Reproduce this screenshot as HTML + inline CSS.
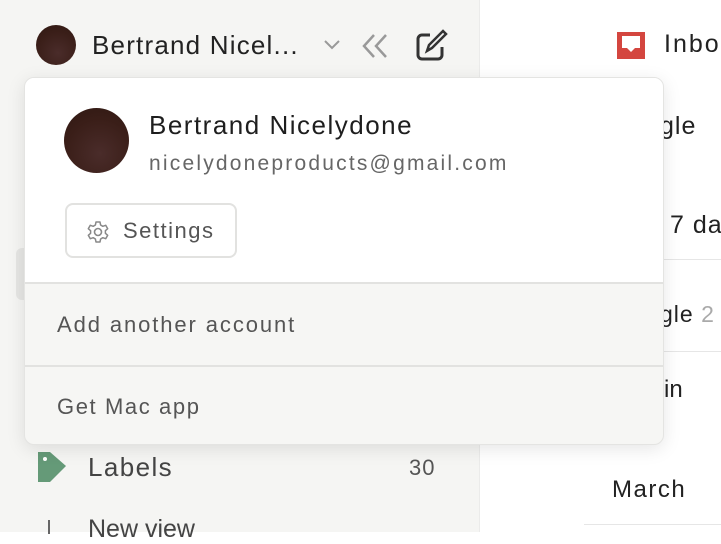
<!DOCTYPE html>
<html><head><style>
*{margin:0;padding:0;box-sizing:border-box}
body{width:721px;height:532px;overflow:hidden;font-family:"Liberation Sans",sans-serif;background:#fff;position:relative}
.side{position:absolute;left:0;top:0;width:480px;height:532px;background:#f5f5f3;border-right:1px solid #ebebea}
.abs{position:absolute;white-space:nowrap}
.av{border-radius:50%;background:radial-gradient(circle at 55% 70%,#4a2c2a,#3a1e18 60%,#2e1812)}
.pop{position:absolute;left:24px;top:77px;width:640px;height:368px;border-radius:10px;background:#f6f6f4;border:1px solid #e4e4e2;box-shadow:0 4px 18px rgba(0,0,0,.1);overflow:hidden}
.top{position:absolute;left:0;top:0;width:640px;height:206px;background:#fff;border-bottom:2px solid #e2e2e0}
.div2{position:absolute;left:0;top:287px;width:640px;height:2px;background:#e2e2e0}
</style></head><body>
<div class="side"></div>
<div class="abs av" style="left:36px;top:25px;width:40px;height:40px"></div>
<div class="abs" style="left:92px;top:30px;font-size:26px;letter-spacing:1.2px;color:#222">Bertrand Nicel...</div>
<svg class="abs" style="left:322px;top:38px" width="20" height="14"><path d="M3 3l7 7 7-7" stroke="#999" stroke-width="2" fill="none"/></svg>
<svg class="abs" style="left:360px;top:32px" width="32" height="28"><path d="M14 3l-10 11 10 11M26 3l-10 11 10 11" stroke="#999" stroke-width="2.5" fill="none"/></svg>
<svg class="abs" style="left:414px;top:29px" width="36" height="34"><path d="M16 6H8a4 4 0 0 0-4 4v16a4 4 0 0 0 4 4h16a4 4 0 0 0 4-4v-8" stroke="#333" stroke-width="3" fill="none"/><path d="M13 22l2-6 14-14 3 3-14 14z" stroke="#333" stroke-width="2.5" fill="none"/></svg>
<svg class="abs" style="left:614px;top:30px" width="34" height="31"><path d="M3 2h28v27H3z" fill="#d4463f"/><path d="M8 6h18v12h-5l-4 4-4-4H8z" fill="#fff"/></svg>
<div class="abs" style="left:664px;top:30px;font-size:25px;letter-spacing:2px;color:#222">Inbo</div>
<div class="abs" style="left:660px;top:112px;font-size:25px;letter-spacing:1px;color:#222">gle</div>
<div class="abs" style="left:670px;top:211px;font-size:25px;letter-spacing:1px;color:#222">7 da</div>
<div class="abs" style="left:584px;top:259px;width:137px;height:1px;background:#e6e6e6"></div>
<div class="abs" style="left:660px;top:301px;font-size:23px;letter-spacing:1px;color:#222">gle <span style="color:#aaa">2</span></div>
<div class="abs" style="left:664px;top:351px;width:57px;height:1px;background:#e6e6e6"></div>
<div class="abs" style="left:664px;top:376px;font-size:24px;color:#222">in</div>
<div class="abs" style="left:612px;top:476px;font-size:24px;letter-spacing:1.5px;color:#222">March</div>
<div class="abs" style="left:584px;top:524px;width:137px;height:1px;background:#e6e6e6"></div>
<svg class="abs" style="left:36px;top:450px" width="34" height="34"><path d="M2 2h12l16 14-16 16H2z" fill="#659a78"/><circle cx="9" cy="9" r="2" fill="#fff"/></svg>
<div class="abs" style="left:88px;top:452px;font-size:26px;letter-spacing:1.4px;color:#444">Labels</div>
<div class="abs" style="left:409px;top:455px;font-size:22px;letter-spacing:1px;color:#555">30</div>
<div class="abs" style="left:88px;top:515px;font-size:25px;color:#444">New view</div>
<div class="abs" style="left:48px;top:520px;width:2px;height:14px;background:#666"></div>
<div class="abs" style="left:16px;top:248px;width:20px;height:52px;background:#e6e6e4;border-radius:6px"></div>
<div class="pop">
 <div class="top"></div>
 <div class="abs av" style="left:39px;top:30px;width:65px;height:65px"></div>
 <div class="abs" style="left:124px;top:32px;font-size:26px;letter-spacing:1.5px;color:#1e1e1e">Bertrand Nicelydone</div>
 <div class="abs" style="left:124px;top:74px;font-size:21px;letter-spacing:2.2px;color:#666">nicelydoneproducts@gmail.com</div>
 <div class="abs" style="left:40px;top:125px;width:172px;height:55px;border:2px solid #e2e2e0;border-radius:8px"></div>
 <svg class="abs" style="left:61px;top:142px" width="24" height="24" viewBox="0 0 24 24"><path d="M12 8.5a3.5 3.5 0 1 0 0 7 3.5 3.5 0 0 0 0-7z" stroke="#888" stroke-width="1.6" fill="none"/><path d="M10 2h4l.6 3 2.2 1.3 2.9-1 2 3.4-2.3 2v2.6l2.3 2-2 3.4-2.9-1L14.6 19 14 22h-4l-.6-3-2.2-1.3-2.9 1-2-3.4 2.3-2v-2.6l-2.3-2 2-3.4 2.9 1L9.4 5z" stroke="#888" stroke-width="1.5" fill="none" stroke-linejoin="round"/></svg>
 <div class="abs" style="left:98px;top:140px;font-size:22px;letter-spacing:1.5px;color:#555">Settings</div>
 <div class="abs" style="left:32px;top:234px;font-size:22px;letter-spacing:1.9px;color:#555">Add another account</div>
 <div class="div2"></div>
 <div class="abs" style="left:32px;top:316px;font-size:22px;letter-spacing:1.6px;color:#555">Get Mac app</div>
</div>
</body></html>
